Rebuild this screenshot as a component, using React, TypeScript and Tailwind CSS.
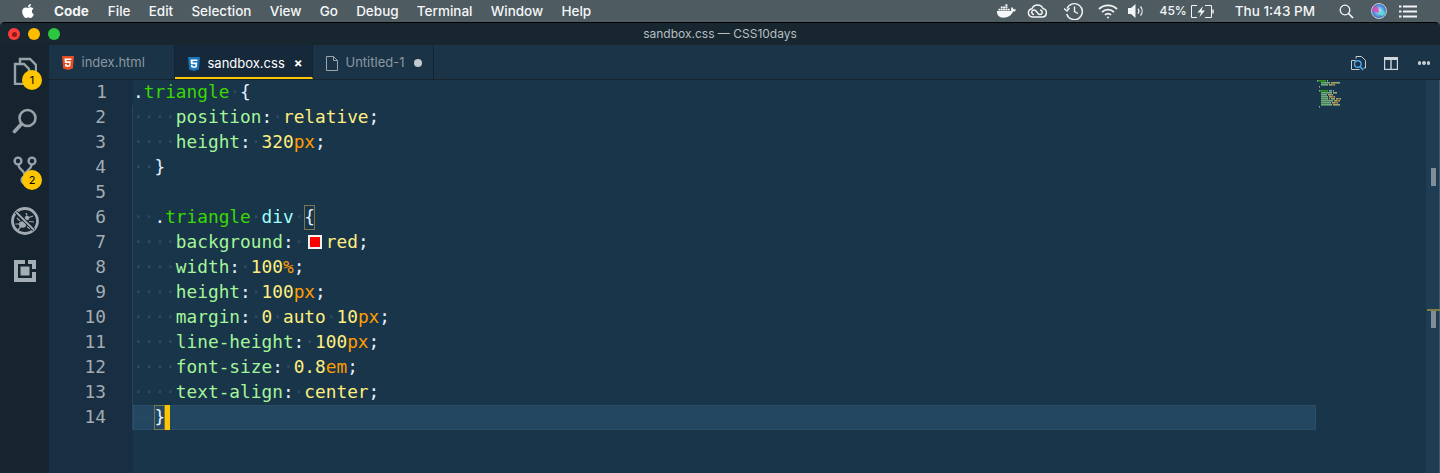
import React from 'react';
import { FaApple, FaDocker } from 'react-icons/fa';

type Kind = 'sel' | 'dot' | 'tag' | 'prop' | 'val' | 'unit' | 'punc' | 'ws' | 'open' | 'close';
type Token = [string, Kind];

const KIND_CLASS: Record<Kind, string> = {
    sel: 'text-[#3ad900]',
    dot: 'text-[#e1efff]',
    tag: 'text-[#9effff]',
    prop: 'text-[#a5f59a]',
    val: 'text-[#ffee80]',
    unit: 'text-[#ff9d00]',
    punc: 'text-[#e1efff]',
    ws: 'text-[#2f4c60]',
    open: 'text-[#e1efff] inline-block h-[25px] shadow-[inset_0_0_0_1px_#77784d]',
    close: 'text-[#e1efff] inline-block h-[25px] shadow-[inset_0_0_0_1px_#77784d]',
};

const MINI_COLOR: Record<Kind, string> = {
    sel: '#3ad900',
    dot: '#e1efff',
    tag: '#9effff',
    prop: '#a5ff90',
    val: '#ffee80',
    unit: '#ff9d00',
    punc: '#e1efff',
    ws: 'none',
    open: '#e1efff',
    close: '#e1efff',
};

// one declaration line: indent, name, colon, then the value tokens
const decl = (name: string, ...value: Token[]): Token[] => [
    ['····', 'ws'],
    [name, 'prop'],
    [':', 'punc'],
    ['·', 'ws'],
    ...value,
    [';', 'punc'],
];

const LINES: Token[][] = [
    [['.', 'dot'], ['triangle', 'sel'], ['·', 'ws'], ['{', 'punc']],
    decl('position', ['relative', 'val']),
    decl('height', ['320', 'val'], ['px', 'unit']),
    [['··', 'ws'], ['}', 'punc']],
    [],
    [['··', 'ws'], ['.', 'dot'], ['triangle', 'sel'], ['·', 'ws'], ['div', 'tag'], ['·', 'ws'], ['{', 'open']],
    decl('background', ['red', 'val']),
    decl('width', ['100', 'val'], ['%', 'unit']),
    decl('height', ['100', 'val'], ['px', 'unit']),
    decl('margin', ['0', 'val'], ['·', 'ws'], ['auto', 'val'], ['·', 'ws'], ['10', 'val'], ['px', 'unit']),
    decl('line-height', ['100', 'val'], ['px', 'unit']),
    decl('font-size', ['0.8', 'val'], ['em', 'unit']),
    decl('text-align', ['center', 'val']),
    [['··', 'ws'], ['}', 'close']],
];

const MENU = ['File', 'Edit', 'Selection', 'View', 'Go', 'Debug', 'Terminal', 'Window', 'Help'];

const Minimap = () => (
    <svg width="30" height="32" className="absolute left-[1px] top-0">
        {LINES.map((line, row) => {
            let col = 0;
            return line.map((tok, i) => {
                const x = col;
                col += tok[0].length;
                if (tok[1] === 'ws') return null;
                return <rect key={`${row}-${i}`} x={x} y={row * 2} width={tok[0].length} height={1.6} fill={MINI_COLOR[tok[1]]} opacity={0.6} />;
            });
        })}
    </svg>
);

const FilesIcon = () => (
    <svg width="24" height="28" viewBox="0 0 24 28" fill="none" stroke="#98a2a8" strokeWidth="2.4">
        <path d="M7 6V2h10l6 6v15h-6" />
        <path d="M2 7h9l5 5v15H2z" />
    </svg>
);

const SearchIcon = () => (
    <svg width="26" height="26" viewBox="0 0 26 26" fill="none" stroke="#98a2a8">
        <circle cx="15.5" cy="10" r="8" strokeWidth="2.6" />
        <path d="M9.5 16L2.5 23.5" strokeWidth="3.6" strokeLinecap="round" />
    </svg>
);

const GitIcon = () => (
    <svg width="24" height="30" viewBox="0 0 24 30" fill="none" stroke="#98a2a8" strokeWidth="2.4">
        <circle cx="5" cy="5" r="3.4" />
        <circle cx="19" cy="5" r="3.4" />
        <circle cx="12" cy="24" r="3.4" />
        <path d="M5.5 9c0 5 6.5 5 6.5 11M18.5 9c0 5-6.5 5-6.5 11" />
    </svg>
);

const DebugIcon = () => (
    <svg width="28" height="28" viewBox="0 0 28 28" fill="none" stroke="#a0aab0">
        <circle cx="14" cy="14" r="12.5" strokeWidth="2.8" />
        <ellipse cx="11.500" cy="17.500" rx="3.600" ry="3.300" fill="#a0aab0" stroke="none" />
        <circle cx="16" cy="11" r="2.300" fill="#a0aab0" stroke="none" />
        <path d="M15 6l1 2.500M22 9l-4 1.500M23 15l-5-.5M19 22l-3-2.500M6 11l3 3M4.500 17h3.500M7 23l2.500-3" strokeWidth="1.200" />
        <path d="M5 5l18 18" stroke="#15242f" strokeWidth="3.600" />
        <path d="M5 5l18 18" strokeWidth="1.800" />
    </svg>
);

const ExtensionsIcon = () => (
    <svg width="22" height="22" viewBox="0 0 22 22" fill="#a4aeb5">
        <path d="M0 0h11v4H4v14h14v-6h4v10H0z" />
        <path d="M14 0h8v9h-4V4h-4z" />
        <rect x="6.500" y="6.500" width="9" height="9" />
    </svg>
);

const Html5Icon = () => (
    <svg width="12" height="14" viewBox="0 0 12 14">
        <path fill="#e44d26" d="M0 0h12l-1.100 12.500L6 14l-4.900-1.500z" />
        <path fill="#fff" d="M9.500 2.500h-7l.4 4.500h4.500l-.15 2-1.250.4-1.250-.4-.1-1.100H3l.15 2.400L5.500 11l2.850-.7.4-5H4.500l-.1-1.300h4.950z" />
    </svg>
);

const Css3Icon = () => (
    <svg width="12" height="14" viewBox="0 0 12 14">
        <path fill="#1b73ba" d="M0 0h12l-1.100 12.500L6 14l-4.900-1.500z" />
        <path fill="#fff" d="M2.500 2.500h7l-.15 1.600H4.600l.1 1.300h4.500l-.4 4.900L6 11l-2.800-.7-.15-2.200h1.500l.1 1 1.350.4 1.350-.4.1-1.800H2.900z" />
    </svg>
);

const FileIcon = () => (
    <svg width="12" height="15" viewBox="0 0 12 15" fill="none" stroke="#9aa5ac" strokeWidth="1">
        <path d="M.5.500h7l4 4v10H.5zM7.500.500v4h4" />
    </svg>
);

const CloudIcon = () => (
    <svg width="20" height="14" viewBox="0 0 20 14" fill="none" stroke="#f2f4f5" strokeWidth="1.500">
        <path d="M5 13h10a4.300 4.300 0 0 0 1-8.500A6 6 0 0 0 5 4.700 4.200 4.200 0 0 0 5 13z" />
        <path d="M7 10.500a2.300 2.300 0 1 1 2-3.500l2 2.500a2.300 2.300 0 1 0 2-3.500" />
    </svg>
);

const TimeMachineIcon = () => (
    <svg width="19" height="18" viewBox="0 0 19 18" fill="none" stroke="#f2f4f5" strokeWidth="1.400">
        <path d="M3 6.500a8 8 0 1 1-.3 5.500" />
        <path d="M0 6.500l3 2.500 2.500-3" />
        <path d="M10.500 4.500v5l3.500 2" />
    </svg>
);

const WifiIcon = () => (
    <svg width="20" height="15" viewBox="0 0 20 15" fill="none" stroke="#f2f4f5" strokeWidth="1.800">
        <path d="M1 5a13 13 0 0 1 18 0M4 8.200a8.500 8.500 0 0 1 12 0M7 11a4 4 0 0 1 6 0" />
        <circle cx="10" cy="13.500" r="1" fill="#f2f4f5" stroke="none" />
    </svg>
);

const VolumeIcon = () => (
    <svg width="17" height="14" viewBox="0 0 17 14" fill="none" stroke="#f2f4f5" strokeWidth="1.200">
        <path d="M0 4h3l4.500-4v14L3 10H0z" fill="#f2f4f5" stroke="none" />
        <path d="M10 4.500a4 4 0 0 1 0 5M12.500 2.500a7 7 0 0 1 0 9" />
    </svg>
);

const BatteryIcon = () => (
    <svg width="23" height="13" viewBox="0 0 23 13" fill="none" stroke="#f2f4f5">
        <path d="M6 .500H.5v12H6M14 .500h6.500v12H14" />
        <path d="M22 4.500v4" strokeWidth="1.400" />
        <path d="M12 1L6.500 7.500h3.500L8.500 12 14 5.500h-3.500z" fill="#f2f4f5" stroke="none" />
    </svg>
);

const MenuSearchIcon = () => (
    <svg width="15" height="15" viewBox="0 0 15 15" fill="none" stroke="#f2f4f5">
        <circle cx="6" cy="6" r="4.800" strokeWidth="1.300" />
        <path d="M9.500 9.500l4.500 4.500" strokeWidth="1.700" />
    </svg>
);

const SiriIcon = () => (
    <svg width="16" height="16" viewBox="0 0 16 16">
        <defs>
            <radialGradient id="siri" cx="50%" cy="50%" r="60%">
                <stop offset="0" stopColor="#e8f6ff" />
                <stop offset="0.4" stopColor="#5fb7f0" />
                <stop offset="1" stopColor="#3a3f9e" />
            </radialGradient>
        </defs>
        <circle cx="8" cy="8" r="7.500" fill="url(#siri)" stroke="#e8eaec" strokeWidth="0.800" />
        <path d="M2 5c2-3 5-2 6 2s-3 3-6 1z" fill="#e24bb5" opacity="0.9" />
        <path d="M14 11c-2 3-5 2-6-1s3-3 6-1z" fill="#5ce0d0" opacity="0.85" />
    </svg>
);

const ListIcon = () => (
    <svg width="18" height="13" viewBox="0 0 18 13" fill="#f2f4f5">
        <rect x="0" y="0.500" width="2.500" height="2" />
        <rect x="0" y="5.500" width="2.500" height="2" />
        <rect x="0" y="10.500" width="2.500" height="2" />
        <rect x="4" y="0.500" width="14" height="2" />
        <rect x="4" y="5.500" width="14" height="2" />
        <rect x="4" y="10.500" width="14" height="2" />
    </svg>
);

const OpenChangesIcon = () => (
    <svg width="15" height="15" viewBox="0 0 15 15" fill="none" stroke="#c5ced3">
        <path d="M4.500 4.500H.5v9h8" />
        <path d="M5 2.500v-2h5.500l4 4V12h-2" />
        <circle cx="6.800" cy="8" r="3.300" stroke="#4fa8e8" strokeWidth="1.400" />
        <path d="M9 10.500l3 3.500" stroke="#4fa8e8" strokeWidth="1.600" />
    </svg>
);

const SplitIcon = () => (
    <svg width="14" height="13" viewBox="0 0 14 13" fill="none" stroke="#d0d7db" strokeWidth="1.200">
        <rect x="0.600" y="1" width="12.800" height="11.400" />
        <path d="M0 1.500h14" strokeWidth="3" />
        <path d="M7 1v11" strokeWidth="1.400" />
    </svg>
);

const Badge = ({ n }: { n: number }) => (
    <span className="absolute left-[22px] top-[24px] flex h-5 w-5 items-center justify-center rounded-full bg-[#ffc600] text-[11px] text-black">
        {n}
    </span>
);

const Tab = ({ icon, label, active, trail, width }: { icon: React.ReactNode; label: string; active?: boolean; trail?: React.ReactNode; width: string }) => (
    <div className={`flex h-full items-center border-r border-[#13232f] ${width} ${active ? 'bg-[#15293a] border-b-2 border-b-[#ffc600] pt-[5px] text-[#ffffff]' : 'bg-[#1a3347] pt-[2px] text-[#8b98a1]'}`}>
        <span className="ml-[12px] mr-[6.5px] flex w-[14px] justify-center">{icon}</span>
        <span className="text-[13px]">{label}</span>
        {trail}
    </div>
);

export default function App() {
    return (
        <div className="relative flex h-[473px] w-[1440px] flex-col overflow-hidden bg-[#4f5c63] font-['Inter',sans-serif]">
            {/* macOS menu bar */}
            <div className="flex h-[22px] shrink-0 items-center bg-[#4e5b61] text-[13.500px] text-[#f4f6f7]">
                <FaApple className="ml-[20px] h-[16px] w-[16px] text-white" />
                <span className="ml-[18px] font-bold">Code</span>
                <div className="ml-[19px] flex gap-[18.200px] font-medium">
                    {MENU.map((m) => (
                        <span key={m}>{m}</span>
                    ))}
                </div>
                <div className="ml-auto flex items-center">
                    <FaDocker className="mr-[11px] h-[18px] w-[19px]" />
                    <span className="mr-[17px]"><CloudIcon /></span>
                    <TimeMachineIcon />
                    <span className="ml-[15px]"><WifiIcon /></span>
                    <span className="ml-[10px]"><VolumeIcon /></span>
                    <span className="ml-[15px] text-[12px] font-medium">45%</span>
                    <span className="ml-[4px]"><BatteryIcon /></span>
                    <span className="ml-[21px] font-medium">Thu 1:43 PM</span>
                    <span className="ml-[24px]"><MenuSearchIcon /></span>
                    <span className="ml-[17px]"><SiriIcon /></span>
                    <span className="ml-[12px] mr-[23px]"><ListIcon /></span>
                </div>
            </div>

            {/* window */}
            <div className="flex min-h-0 flex-1 flex-col overflow-hidden rounded-t-[5px] border-t border-black bg-[#193549]">
                <div className="relative flex h-[22px] shrink-0 items-center justify-center bg-[#18262f] text-[12px] text-[#b6bec3]">
                    <div className="absolute left-[8px] top-[5px] flex gap-[8px]">
                        <span className="flex h-3 w-3 items-center justify-center rounded-full bg-[#fc3d39]">
                            <span className="h-[5px] w-[5px] rounded-full bg-[#8d1a16]" />
                        </span>
                        <span className="h-3 w-3 rounded-full bg-[#fdbc00]" />
                        <span className="h-3 w-3 rounded-full bg-[#2bc73f]" />
                    </div>
                    sandbox.css — CSS10days
                </div>

                <div className="flex min-h-0 flex-1">
                    {/* activity bar */}
                    <div className="flex w-[49px] shrink-0 flex-col items-center bg-[#15242f] pt-[1px]">
                        <div className="relative flex h-[50px] w-full items-center justify-center"><FilesIcon /><Badge n={1} /></div>
                        <div className="flex h-[50px] w-full items-center justify-center"><SearchIcon /></div>
                        <div className="relative flex h-[50px] w-full items-center justify-center"><GitIcon /><Badge n={2} /></div>
                        <div className="flex h-[50px] w-full items-center justify-center"><DebugIcon /></div>
                        <div className="flex h-[50px] w-full items-center justify-center"><ExtensionsIcon /></div>
                    </div>

                    <div className="flex min-w-0 flex-1 flex-col">
                        {/* tabs */}
                        <div className="flex h-[35px] shrink-0 items-center border-b border-[#15242f] bg-[#1b3448]">
                            <Tab width="w-[126px]" icon={<Html5Icon />} label="index.html" />
                            <Tab
                                width="w-[138px]"
                                active
                                icon={<Css3Icon />}
                                label="sandbox.css"
                                trail={<span className="ml-[9px] text-[13px] font-bold text-white">×</span>}
                            />
                            <Tab
                                width="w-[121px]"
                                icon={<FileIcon />}
                                label="Untitled-1"
                                trail={<span className="ml-[10px] h-2 w-2 rounded-full bg-[#c3c9cd]" />}
                            />
                            <div className="ml-auto flex items-center pr-[10px] pt-[2px]">
                                <OpenChangesIcon />
                                <span className="ml-[18px]"><SplitIcon /></span>
                                <span className="ml-[20px] flex gap-[1px]">
                                    <span className="h-[3.500px] w-[3.500px] rounded-full bg-[#c5ced3]" />
                                    <span className="h-[3.500px] w-[3.500px] rounded-full bg-[#c5ced3]" />
                                    <span className="h-[3.500px] w-[3.500px] rounded-full bg-[#c5ced3]" />
                                </span>
                            </div>
                        </div>

                        {/* editor */}
                        <div className="flex min-h-0 flex-1 font-['DejaVu_Sans_Mono',monospace] text-[17.800px] leading-[23px]">
                            <div className="w-[84px] shrink-0 bg-[#182e42] text-right text-[#a4acb1]">
                                {LINES.map((_, i) => (
                                    <div key={i} className={`h-[25px] pr-[26px] ${i > 0 ? 'border-r border-[#24455c]' : ''}`}>{i + 1}</div>
                                ))}
                            </div>
                            <div className="relative w-[1183px] shrink-0 whitespace-pre">
                                {LINES.map((line, row) => (
                                    <div key={row} className={`h-[25px] ${row === 13 ? 'bg-[#234661] shadow-[inset_0_0_0_1px_#2a4d68]' : ''}`}>
                                        {line.map((tok, i) => (
                                            <React.Fragment key={i}>
                                                <span className={KIND_CLASS[tok[1]]}>{tok[0]}</span>
                                                {row === 6 && i === 3 && (
                                                    <span className="ml-[3.500px] mr-[4px] inline-block h-[14px] w-[14px] border-2 border-[#f2f2f2] bg-[#ff0000] align-[-1px]" />
                                                )}
                                                {tok[1] === 'close' && (
                                                    <span className="inline-block h-[25px] w-[5px] bg-[#ffc600] align-top" />
                                                )}
                                            </React.Fragment>
                                        ))}
                                    </div>
                                ))}
                            </div>
                            <div className="relative min-w-0 flex-1">
                                <Minimap />
                            </div>
                            {/* overview ruler */}
                            <div className="relative w-[14px] shrink-0 border-r border-[#3e5a6e] bg-[#1e3d55]">
                                <span className="absolute left-[5px] top-[88px] h-[18px] w-[5px] bg-[#7e8f9b]" />
                                <span className="absolute left-[1px] top-[229px] h-[2px] w-[13px] bg-[#7d7e42]" />
                                <span className="absolute left-[5px] top-[231px] h-[17px] w-[5px] bg-[#7e8f9b]" />
                            </div>
                        </div>
                    </div>
                </div>
            </div>
        </div>
    );
}
